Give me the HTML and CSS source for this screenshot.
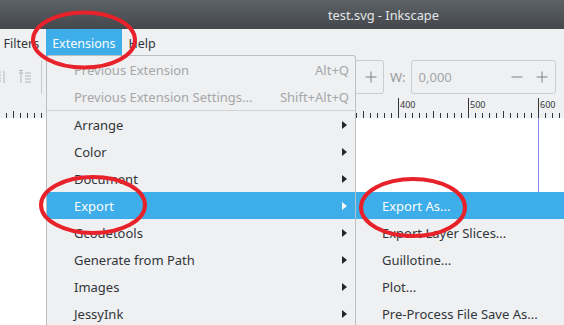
FILE: index.html
```html
<!DOCTYPE html>
<html>
<head>
<meta charset="utf-8">
<title>test.svg - Inkscape</title>
<link rel="stylesheet" href="styles.css">
</head>
<body>
<div class="window">
  <div class="titlebar"><span class="title">test.svg - Inkscape</span></div>
  <div class="menubar">
    <span class="mb-item first">Filters</span>
    <span class="mb-item active">Extensions</span>
    <span class="mb-item">Help</span>
  </div>
  <div class="toolbar">
    <svg class="tb-icon icon-a" width="14" height="14" viewBox="0 0 14 14">
      <path d="M1 2h8M1 5h8M1 8h8M1 11h8M12 1v12" stroke="#b5b7b9" stroke-width="1" fill="none"/>
    </svg>
    <svg class="tb-icon icon-b" width="14" height="14" viewBox="0 0 14 14">
      <path d="M3 13V2M1 4l2-2.5L5 4M1 0.5h4M7 3h6M7 6h6M7 9h6M7 12h6" stroke="#b5b7b9" stroke-width="1" fill="none"/>
    </svg>
    <span class="tb-sep"></span>
    <div class="spin spin-x">
      <span class="spin-btn"><svg width="12" height="12" viewBox="0 0 12 12"><path d="M6 0.5v11M0.5 6h11" stroke="#7d8084" stroke-width="1"/></svg></span>
    </div>
    <span class="tb-label">W:</span>
    <div class="spin spin-w">
      <span class="spin-val">0,000</span>
      <span class="spin-btn"><svg width="12" height="12" viewBox="0 0 12 12"><path d="M0.5 6h11" stroke="#7d8084" stroke-width="1"/></svg></span>
      <span class="spin-btn"><svg width="12" height="12" viewBox="0 0 12 12"><path d="M6 0.5v11M0.5 6h11" stroke="#7d8084" stroke-width="1"/></svg></span>
    </div>
  </div>
  <div class="ruler">
    <span class="rseg">400</span>
    <span class="rseg">500</span>
    <span class="rseg">600</span>
  </div>
  <div class="canvas"></div>

  <div class="menu">
    <div class="mi disabled"><span class="ml">Previous Extension</span><span class="ms">Alt+Q</span></div>
    <div class="mi disabled"><span class="ml">Previous Extension Settings...</span><span class="ms">Shift+Alt+Q</span></div>
    <div class="msep"></div>
    <div class="mi"><span class="ml">Arrange</span><svg class="arr" width="5" height="8" viewBox="0 0 5 8"><path d="M0 0L5 4L0 8Z"/></svg></div>
    <div class="mi"><span class="ml">Color</span><svg class="arr" width="5" height="8" viewBox="0 0 5 8"><path d="M0 0L5 4L0 8Z"/></svg></div>
    <div class="mi"><span class="ml">Document</span><svg class="arr" width="5" height="8" viewBox="0 0 5 8"><path d="M0 0L5 4L0 8Z"/></svg></div>
    <div class="mi hl"><span class="ml">Export</span><svg class="arr" width="5" height="8" viewBox="0 0 5 8"><path d="M0 0L5 4L0 8Z"/></svg></div>
    <div class="mi"><span class="ml">Gcodetools</span><svg class="arr" width="5" height="8" viewBox="0 0 5 8"><path d="M0 0L5 4L0 8Z"/></svg></div>
    <div class="mi"><span class="ml">Generate from Path</span><svg class="arr" width="5" height="8" viewBox="0 0 5 8"><path d="M0 0L5 4L0 8Z"/></svg></div>
    <div class="mi"><span class="ml">Images</span><svg class="arr" width="5" height="8" viewBox="0 0 5 8"><path d="M0 0L5 4L0 8Z"/></svg></div>
    <div class="mi"><span class="ml">JessyInk</span><svg class="arr" width="5" height="8" viewBox="0 0 5 8"><path d="M0 0L5 4L0 8Z"/></svg></div>
  </div>

  <div class="submenu">
    <div class="mi hl"><span class="ml">Export As...</span></div>
    <div class="mi"><span class="ml">Export Layer Slices...</span></div>
    <div class="mi"><span class="ml">Guillotine...</span></div>
    <div class="mi"><span class="ml">Plot...</span></div>
    <div class="mi"><span class="ml">Pre-Process File Save As...</span></div>
  </div>

  <svg class="marks" width="564" height="325" viewBox="0 0 564 325">
    <ellipse cx="84" cy="40" rx="51" ry="27.5" />
    <ellipse cx="93" cy="205" rx="52" ry="28" />
    <ellipse cx="413" cy="207.5" rx="52" ry="28.5" />
  </svg>
</div>
</body>
</html>
```

FILE: styles.css
```css
* { box-sizing: border-box; margin: 0; padding: 0; }
html, body { width: 564px; height: 325px; overflow: hidden; }
body {
  font-family: "Noto Sans", "DejaVu Sans", sans-serif;
  font-size: 13px;
  color: #31363b;
  background: #ffffff;
}
.window {
  position: relative;
  width: 564px;
  height: 325px;
  overflow: hidden;
  display: flex;
  flex-direction: column;
}
.titlebar {
  height: 29px;
  flex: none;
  background: linear-gradient(#5d6266, #44484c);
  color: #e4e6e8;
  display: flex;
  align-items: center;
  padding-left: 328px;
  padding-top: 1px;
  font-size: 12.8px;
}
.menubar {
  height: 28px;
  flex: none;
  background: #eff0f1;
  display: flex;
  align-items: stretch;
  font-size: 12.5px;
}
.mb-item {
  display: flex;
  align-items: center;
  padding: 0 6.5px;
  white-space: nowrap;
}
.mb-item.first { margin-left: -3px; }
.mb-item.active { background: #3daee9; color: #fcfcfc; }

.toolbar {
  height: 39px;
  flex: none;
  background: #eff0f1;
  display: flex;
  align-items: center;
}
.tb-icon { flex: none; }
.icon-a { margin-left: -8px; }
.icon-b { margin-left: 12px; }
.tb-sep {
  flex: none;
  width: 1px;
  height: 34px;
  background: #c9cbcd;
  margin-left: 9px;
}
.spin {
  flex: none;
  height: 34px;
  border: 1px solid #cbcdcf;
  border-radius: 3px;
  background: #eff0f1;
  display: flex;
  align-items: center;
  justify-content: flex-end;
}
.spin-x { width: 134px; margin-left: 208px; }
.spin-w { width: 145px; margin-left: 5px; }
.spin-btn {
  width: 25px;
  height: 100%;
  display: flex;
  align-items: center;
  justify-content: center;
}
.spin-val {
  flex: 1;
  padding-left: 7px;
  color: #a4a6a8;
}
.tb-label {
  margin-left: 6px;
  color: #9a9c9e;
}

.ruler {
  height: 22px;
  flex: none;
  background-color: #eff0f1;
  background-image:
    linear-gradient(to right, #31363b 0 1px, transparent 1px),
    linear-gradient(to right, #31363b 0 1px, transparent 1px),
    linear-gradient(to right, #31363b 0 1px, transparent 1px);
  background-size: 70px 20px, 35px 7px, 7px 5px;
  background-position: 48px 100%, 13px 100%, 6px 100%;
  background-repeat: repeat-x;
  display: flex;
  padding-left: 398px;
  overflow: hidden;
}
.rseg {
  flex: none;
  width: 70px;
  padding-left: 2px;
  padding-top: 3px;
  font-size: 9px;
  line-height: 11px;
  color: #31363b;
}
.canvas {
  flex: 1;
  background: linear-gradient(to right, transparent 538px, #8c8cf2 538px 539px, transparent 539px), #ffffff;
}

.menu {
  position: absolute;
  left: 46px;
  top: 55px;
  width: 310px;
  height: 290px;
  background: #eff0f1;
  border: 1px solid #bdbfc1;
  border-radius: 3px;
}
.mi {
  height: 27px;
  display: flex;
  align-items: center;
  padding: 1px 6px 0 27px;
  white-space: nowrap;
}
.ml { flex: 1; }
.mi.disabled { color: #a5a7a9; }
.ms { color: #a5a7a9; }
.arr { fill: #232627; margin-right: 2px; flex: none; }
.mi.hl { background: #3daee9; color: #fcfcfc; }
.mi.hl .arr { fill: #fcfcfc; }
.msep { height: 1px; background: #d1d2d3; }

.submenu {
  position: absolute;
  left: 355px;
  top: 192px;
  width: 230px;
  height: 160px;
  background: #eff0f1;
  border-left: 1px solid #bdbfc1;
}
.submenu .mi { padding-left: 26px; }

.marks {
  position: absolute;
  left: 0;
  top: 0;
  pointer-events: none;
}
.marks ellipse {
  fill: none;
  stroke: #e8222a;
  stroke-width: 4;
}
```
